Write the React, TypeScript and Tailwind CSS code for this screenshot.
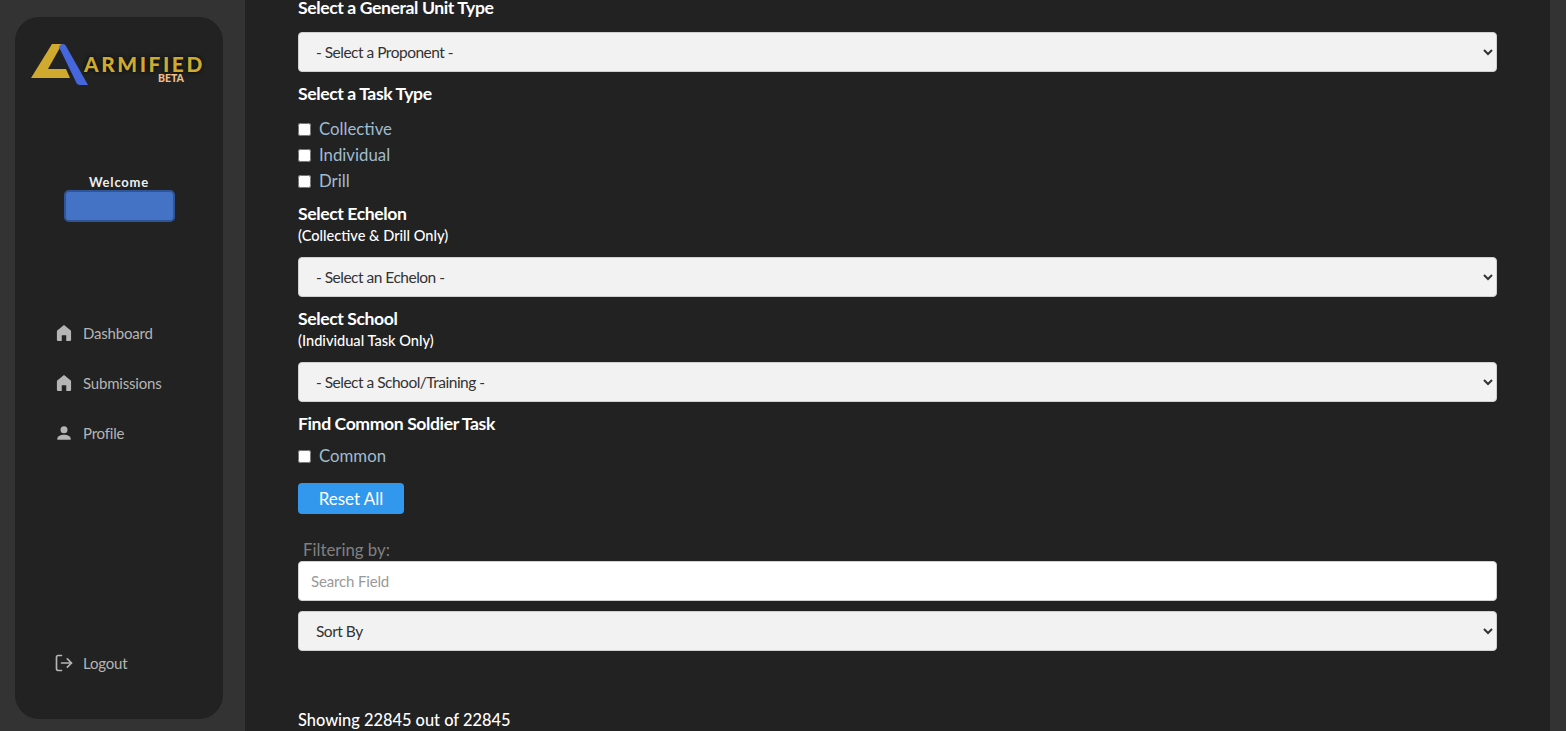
import { LogOut } from "lucide-react"

const navItems = [
  { name: "Dashboard", icon: "home" },
  { name: "Submissions", icon: "home" },
  { name: "Profile", icon: "user" },
]

function HomeIcon() {
  return (
    <svg viewBox="0 0 24 24" className="w-[20px] h-[20px] fill-[#b5b5b5]">
      <path d="M12 2.500 4.200 8.600c-.5.4-.7.9-.7 1.500V20.500c0 .5.4 1 1 1h4.800v-6.700h5.400v6.700h4.800c.6 0 1-.5 1-1V10.100c0-.6-.2-1.100-.7-1.500z" />
    </svg>
  )
}

function UserIcon() {
  return (
    <svg viewBox="0 0 24 24" className="w-[20px] h-[20px] fill-[#b5b5b5]">
      <circle cx="12" cy="8" r="4.200" />
      <path d="M12 14c-3.600 0-8 1.700-8 4.500V20h16v-1.500c0-2.800-4.400-4.500-8-4.500z" />
    </svg>
  )
}

function Logo() {
  return (
    <div className="relative h-[44px] w-[175px] ml-[15px]">
      <svg viewBox="0 0 60 42" className="absolute left-0 top-0 w-[60px] h-[42px]">
        <path d="M1 34 L22 0 L32 0 L18 25 L36 25 L40 34 Z" fill="#d0a92f" />
        <path d="M29 3 Q30 0 33 0 Q35 0 36 2 L58 41 L50 41 Q47 41 46 38 Z" fill="#4566dc" />
      </svg>
      <span className="absolute left-[54px] top-[11px] font-black text-[20.800px] leading-[18px] tracking-[2.600px] text-[#d0a92f] [text-shadow:0_0_4px_#000]">
        ARMIFIED
      </span>
      <span className="absolute left-[128px] top-[29px] font-black text-[10.500px] leading-[10px] text-[#f0c08c]">
        BETA
      </span>
    </div>
  )
}

function Sidebar() {
  return (
    <aside className="w-[245px] shrink-0 pl-[15px] pt-[17px]">
      <div className="w-[208px] h-[702px] rounded-[24px] bg-[#222222] flex flex-col pt-[27px]">
        <Logo />
        <div className="mt-[86px] flex flex-col items-center">
          <span className="text-[13px] leading-[16px] font-bold tracking-[0.800px] text-[#eeeeee]">Welcome</span>
          <div className="w-[111px] h-[32px] rounded-[5px] bg-[#4472c4] border-2 border-[#2f5597]" />
        </div>
        <nav className="mt-[86px] flex flex-col">
          {navItems.map((item) => (
            <a key={item.name} className="h-[50px] pl-[39px] flex items-center gap-[9px] text-[15px] tracking-[-0.200px] text-[#b5b5b5]">
              {item.icon === "home" ? <HomeIcon /> : <UserIcon />}
              {item.name}
            </a>
          ))}
        </nav>
        <a className="mt-auto mb-[31px] h-[50px] pl-[39px] flex items-center gap-[9px] text-[15px] tracking-[-0.200px] text-[#b5b5b5]">
          <LogOut className="w-[20px] h-[20px]" strokeWidth={2} />
          Logout
        </a>
      </div>
    </aside>
  )
}

function Heading({ title, note, className }: { title: string; note?: string; className?: string }) {
  return (
    <div className={className}>
      <div className="text-[17.600px] leading-[22px] tracking-[-0.400px] font-bold text-white">{title}</div>
      {note && <div className="text-[14.600px] leading-[21px] font-medium text-white">{note}</div>}
    </div>
  )
}

function SelectBox({ label, className }: { label: string; className?: string }) {
  return (
    <select className={`block w-full h-[40px] rounded-[4px] border border-[#d0d0d0] bg-[#f2f2f2] pl-[13px] pr-[7px] text-[15.500px] tracking-[-0.500px] text-[#333333] ${className ?? ""}`}>
      <option>{label}</option>
    </select>
  )
}

function Check({ label, className }: { label: string; className?: string }) {
  return (
    <label className={`flex items-center h-[26px] ${className ?? ""}`}>
      <input type="checkbox" className="w-[13px] h-[13px] m-0" />
      <span className="ml-[8px] text-[16.800px] leading-[26px] text-[#a0bccf]">{label}</span>
    </label>
  )
}

export default function App() {
  return (
    <div className="flex h-[731px] overflow-hidden bg-[#333333] font-['Lato',sans-serif]">
      <Sidebar />
      <main className="w-[1305px] shrink-0 bg-[#222222] pl-[53px] pr-[53px]">
        <div className="text-[17.600px] leading-[16px] tracking-[-0.400px] font-bold text-white">Select a General Unit Type</div>
        <SelectBox label="- Select a Proponent -" className="mt-[16px]" />
        <Heading title="Select a Task Type" className="mt-[11px]" />
        <div className="mt-[11px] flex flex-col">
          <Check label="Collective" />
          <Check label="Individual" />
          <Check label="Drill" />
        </div>
        <Heading title="Select Echelon" note="(Collective & Drill Only)" className="mt-[9px]" />
        <SelectBox label="- Select an Echelon -" className="mt-[11px]" />
        <Heading title="Select School" note="(Individual Task Only)" className="mt-[11px]" />
        <SelectBox label="- Select a School/Training -" className="mt-[11px]" />
        <Heading title="Find Common Soldier Task" className="mt-[11px]" />
        <Check label="Common" className="mt-[8px]" />
        <button className="block mt-[14px] w-[106px] h-[31px] rounded-[4px] bg-[#3298ed] text-[17px] text-white">
          Reset All
        </button>
        <div className="mt-[25px] pl-[5px] text-[16.800px] leading-[22px] text-[#808080]">Filtering by:</div>
        <input
          placeholder="Search Field"
          className="block w-full h-[40px] rounded-[4px] border border-[#d0d0d0] bg-white px-[12px] text-[15px] tracking-[-0.150px] text-[#333333] placeholder:text-[#999999]"
        />
        <SelectBox label="Sort By" className="mt-[10px]" />
        <div className="mt-[58px] text-[16.400px] leading-[22px] font-medium text-white">Showing 22845 out of 22845</div>
      </main>
    </div>
  )
}
